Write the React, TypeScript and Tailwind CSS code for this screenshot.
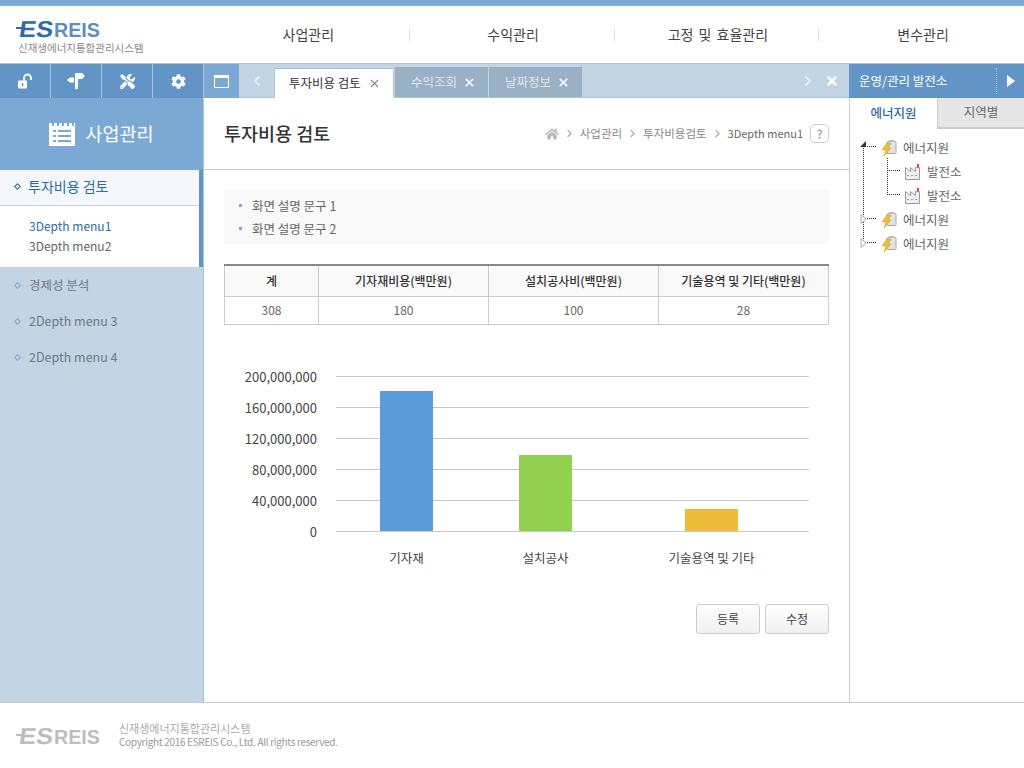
import { FaCog, FaHome, FaTools } from 'react-icons/fa';
import { ChevronLeft, ChevronRight, X } from 'lucide-react';

const FONT = "font-['Noto_Sans_CJK_KR','Noto_Sans',sans-serif]";

const NAV = ['사업관리', '수익관리', '고정 및 효율관리', '변수관리'];
const TABLE_HEAD = ['계', '기자재비용(백만원)', '설치공사비(백만원)', '기술용역 및 기타(백만원)'];
const TABLE_ROW = ['308', '180', '100', '28'];

const TICKS = ['200,000,000', '160,000,000', '120,000,000', '80,000,000', '40,000,000', '0'];
const BARS = [
  { label: '기자재', x: 156, w: 53, top: 15, fill: '#5b9bd9' },
  { label: '설치공사', x: 295, w: 53, top: 79, fill: '#92d14f' },
  { label: '기술용역 및 기타', x: 461, w: 53, top: 133, fill: '#edbb3a' },
];

function Logo({ gray }: { gray?: boolean }) {
  const dark = gray ? '#bdbdbd' : '#2a6cab';
  const light = gray ? '#bdbdbd' : '#5b8fbf';
  return (
    <svg width="90" height="24" viewBox="0 0 90 24" className="block">
      <rect x="0" y="10" width="8" height="2" fill={dark} />
      <text x="0" y="20" transform="skewX(-8) translate(5 0)" fontFamily="Liberation Sans" fontWeight="700" fontSize="23" textLength="34" lengthAdjust="spacingAndGlyphs" fill={dark}>ES</text>
      <text x="38" y="20" fontFamily="Liberation Sans" fontWeight="700" fontSize="20" textLength="46" lengthAdjust="spacingAndGlyphs" fill={light}>REIS</text>
    </svg>
  );
}

function LockIcon() {
  return (
    <svg width="16" height="16" viewBox="0 0 16 16">
      <path d="M7 8V5a3.500 3.500 0 0 1 7 0v2" fill="none" stroke="#fff" strokeWidth="1.800" />
      <rect x="1" y="7.500" width="9" height="8" rx="1" fill="#fff" />
      <rect x="4.800" y="10" width="1.500" height="3.500" fill="#6295c5" />
    </svg>
  );
}

function SignIcon() {
  return (
    <svg width="18" height="16" viewBox="0 0 18 16" fill="#fff">
      <path d="M8 0h7l3 3-3 3h-4v10H8z" />
      <path d="M7 4.500H3L0 7l3 2.500h4z" />
    </svg>
  );
}

function NoteIcon() {
  return (
    <svg width="26" height="24" viewBox="0 0 26 24">
      <rect x="0" y="1" width="26" height="23" fill="#fff" />
      <g fill="#7ba9d4">
        <rect x="3" y="1" width="2" height="3" />
        <rect x="8" y="1" width="2" height="3" />
        <rect x="13" y="1" width="2" height="3" />
        <rect x="18" y="1" width="2" height="3" />
        <rect x="23" y="1" width="2" height="3" />
        <rect x="4" y="8" width="3" height="2" />
        <rect x="9" y="8" width="13" height="2" />
        <rect x="4" y="13" width="3" height="2" />
        <rect x="9" y="13" width="13" height="2" />
        <rect x="4" y="18" width="3" height="2" />
        <rect x="9" y="18" width="13" height="2" />
      </g>
    </svg>
  );
}

function EnergyIcon() {
  return (
    <svg width="16" height="16" viewBox="0 0 16 16" className="shrink-0">
      <rect x="6" y="1.500" width="9" height="12" rx="1" fill="#e4e4e4" stroke="#a8a8a8" />
      <rect x="8" y="0" width="5" height="2" fill="#bdbdbd" />
      <path d="M6 3h4L7.500 8H10l-7 8 2-6H1z" fill="#eec031" stroke="#c99a1a" strokeWidth="0.5" />
    </svg>
  );
}

function PlantIcon() {
  return (
    <svg width="16" height="16" viewBox="0 0 16 16" className="shrink-0">
      <path d="M0.500 15.500V3.500l5 4v-4l5 4v-4l4 0V15.500z" fill="#efefef" stroke="#9a9a9a" />
      <path d="M2 11.500h2M6 11.500h2M10 11.500h2" stroke="#7ba9d4" strokeWidth="1" />
      <rect x="12" y="0" width="2" height="3" fill="#e03a3a" />
    </svg>
  );
}

function TreeRow({ sub, label }: { sub?: boolean; label: string }) {
  return (
    <div className={`flex h-6 items-center gap-1.5 text-[12.500px] text-[#666] ${sub ? 'pl-[55px]' : 'pl-[31px]'}`}>
      {sub ? <PlantIcon /> : <EnergyIcon />}
      <span>{label}</span>
    </div>
  );
}

function SideItem({ label }: { label: string }) {
  return (
    <div className="flex h-9 items-center gap-[9px] pl-[15px] text-[12.500px] text-[#6c7a88]">
      <span className="size-[5px] rotate-45 border border-[#8aa5bf]" />
      <span>{label}</span>
    </div>
  );
}

export default function App() {
  return (
    <div className={`flex h-[768px] w-[1024px] flex-col overflow-hidden bg-white ${FONT}`}>
      <div className="h-[6px] bg-[#7ba9d4]" />

      {/* Header */}
      <header className="flex h-[57px] items-center">
        <div className="w-[205px] pl-[16px] pt-[2px]">
          <Logo />
          <div className="ml-[2px] text-[10.500px] leading-[14px] text-[#8a8a8a]">신재생에너지통합관리시스템</div>
        </div>
        <nav className="grid flex-1 grid-cols-4">
          {NAV.map((n, i) => (
            <div key={n} className={`flex h-3 items-center justify-center pl-[3px] text-[14px] text-[#444] [word-spacing:2px] ${i < 3 ? 'border-r border-[#ddd]' : ''}`}>
              {n}
            </div>
          ))}
        </nav>
      </header>

      {/* Toolbar + tabs */}
      <div className="flex h-[35px] border-t border-[#a9c4dd]">
        <div className="flex w-[204px] bg-[#6295c5]">
          {[<LockIcon key="a" />, <SignIcon key="b" />, <FaTools key="c" />, <FaCog key="d" />].map((ic, i) => (
            <div key={i} className="flex w-[51px] items-center justify-center border-r border-[#a9c4dd] text-[15px] text-white">
              {ic}
            </div>
          ))}
        </div>
        <div className="flex w-[35px] items-center justify-center bg-[#7ba9d4]">
          <div className="h-[13px] w-[15px] border border-t-[3px] border-white" />
        </div>
        <div className="flex flex-1 items-end border-b border-[#a9c4dd] bg-[#c3d4e5]">
          <div className="flex h-full w-[35px] items-center justify-center text-[#e3ecf5]">
            <ChevronLeft size={16} strokeWidth={3} />
          </div>
          <div className="-mb-px flex h-[30px] w-[120px] items-center gap-[7px] border border-b-0 border-[#a9c4dd] bg-white pl-[14px] text-[12.500px] text-[#333]">
            투자비용 검토 <X size={13} className="text-[#888]" />
          </div>
          <div className="ml-px flex h-[30px] w-[93px] items-center gap-1.5 bg-[#9ab0c5] pl-[16px] text-[12.500px] text-[#dfe7ef]">
            수익조회 <X size={13} strokeWidth={3} className="text-white" />
          </div>
          <div className="ml-px flex h-[30px] w-[93px] items-center gap-1.5 bg-[#9ab0c5] pl-[16px] text-[12.500px] text-[#dfe7ef]">
            날짜정보 <X size={13} strokeWidth={3} className="text-white" />
          </div>
          <div className="flex h-full flex-1 items-center justify-end gap-[9px] pr-[10px] text-[#e3ecf5]">
            <ChevronRight size={16} strokeWidth={3} />
            <X size={14} strokeWidth={4} className="text-white" />
          </div>
        </div>
        <div className="flex w-[175px] items-center justify-between bg-[#6295c5] pl-[10px] text-[12.500px] text-white">
          <span>운영/관리 발전소</span>
          <div className="flex h-[26px] w-[28px] items-center justify-center border-l border-dotted border-[#a9c4dd]">
            <span className="border-y-[6px] border-l-[8px] border-y-transparent border-l-white" />
          </div>
        </div>
      </div>

      {/* Body */}
      <div className="flex min-h-0 flex-1">
        <aside className="w-[204px] border-r border-[#a9c4dd] bg-[#c3d4e5]">
          <div className="flex h-[72px] items-center justify-center gap-2.5 bg-[#7ba9d4] text-[18.500px] text-white">
            <NoteIcon />
            <span>사업관리</span>
          </div>
          <div className="border-r-4 border-[#6295c5] bg-white">
            <div className="flex h-9 items-center gap-2 border-b border-[#c3d4e5] bg-[#f4f8fc] pb-[2px] pl-[15px] text-[14px] text-[#2a6cab]">
              <span className="size-[5px] rotate-45 border border-[#2a6cab]" />
              <span>투자비용 검토</span>
            </div>
            <div className="flex h-[61px] flex-col justify-center gap-[1px] pb-[2px] pl-[29px] text-[12px] leading-[19px] text-[#666]">
              <div className="text-[#2a6cab]">3Depth menu1</div>
              <div>3Depth menu2</div>
            </div>
          </div>
          <SideItem label="경제성 분석" />
          <SideItem label="2Depth menu 3" />
          <SideItem label="2Depth menu 4" />
        </aside>

        <main className="min-w-0 flex-1">
          <div className="flex h-[72px] items-center justify-between border-b border-[#ccc] pl-5 pr-5">
            <h1 className="text-[18.500px] font-medium text-[#333]">투자비용 검토</h1>
            <div className="flex items-center gap-1 text-[11.500px] text-[#888]">
              <FaHome size={14} className="text-[#bbb]" />
              <ChevronRight size={13} className="text-[#aaa]" />
              <span>사업관리</span>
              <ChevronRight size={13} className="text-[#aaa]" />
              <span>투자비용검토</span>
              <ChevronRight size={13} className="text-[#aaa]" />
              <span className="text-[11px] text-[#666]">3Depth menu1</span>
              <span className="ml-[3px] flex size-[19px] items-center justify-center rounded-[5px] border border-[#ccc] text-[12px] font-bold text-[#aaa]">?</span>
            </div>
          </div>

          <div className="px-5 pt-5">
            <ul className="h-[54px] bg-[#f9f9f9] py-[4px] pl-[15px] text-[12.500px] leading-[23px] text-[#666]">
              <li className="flex items-center gap-[10px]"><span className="size-[3px] bg-[#7ba9d4]" />화면 설명 문구 1</li>
              <li className="flex items-center gap-[10px]"><span className="size-[3px] bg-[#7ba9d4]" />화면 설명 문구 2</li>
            </ul>

            <table className="mt-5 w-[604px] table-fixed border-collapse border-t-2 border-t-[#888] text-center text-[12px]">
              <colgroup>
                <col className="w-[94px]" />
                <col className="w-[170px]" />
                <col className="w-[170px]" />
                <col className="w-[170px]" />
              </colgroup>
              <thead>
                <tr className="h-[31px] bg-[#f9f9f9]">
                  {TABLE_HEAD.map((h) => (
                    <th key={h} className="border border-t-0 border-[#ccc] font-medium text-[#333]">{h}</th>
                  ))}
                </tr>
              </thead>
              <tbody>
                <tr className="h-[28px]">
                  {TABLE_ROW.map((c, i) => (
                    <td key={i} className="border border-[#ccc] text-[#666]">{c}</td>
                  ))}
                </tr>
              </tbody>
            </table>

            {/* Bar chart */}
            <svg width="605" height="210" viewBox="0 0 605 210" className="mt-[41px] block" fontFamily="Noto Sans CJK KR" fontSize="12.500" fill="#444">
              {TICKS.map((t, i) => (
                <g key={t}>
                  <line x1="112" x2="585" y1={10.5 + i * 31} y2={10.5 + i * 31} stroke="#c8c8c8" />
                  <text x="93" y={16 + i * 31} textAnchor="end" fontSize="13">{t}</text>
                </g>
              ))}
              {BARS.map((b) => (
                <g key={b.label}>
                  <rect x={b.x} y={10 + b.top} width={b.w} height={155 - b.top} fill={b.fill} />
                  <text x={b.x + b.w / 2} y="197" textAnchor="middle">{b.label}</text>
                </g>
              ))}
            </svg>

            <div className="mt-7 flex justify-end gap-[5px]">
              <button className="h-[30px] w-[64px] rounded-[3px] border border-[#ccc] bg-gradient-to-b from-white to-[#f0f0f0] text-[12px] text-[#444]">등록</button>
              <button className="h-[30px] w-[64px] rounded-[3px] border border-[#ccc] bg-gradient-to-b from-white to-[#f0f0f0] text-[12px] text-[#444]">수정</button>
            </div>
          </div>
        </main>

        {/* Right tree panel */}
        <aside className="w-[175px] border-l border-[#ccc]">
          <div className="grid h-[31px] grid-cols-[87px_1fr] text-[12.500px]">
            <div className="flex items-center justify-center font-medium text-[#2a6cab]">에너지원</div>
            <div className="flex items-center justify-center border-b-2 border-l border-[#ccc] bg-[#e6e6e6] text-[#666]">지역별</div>
          </div>
          <div className="relative pt-[7px]">
            <svg width="50" height="120" viewBox="0 0 50 120" className="absolute left-[9px] top-[7px]" fill="none" stroke="#333" strokeDasharray="1 1">
              <path d="M4.500 8V106M6 10.500H17M6 82.500H17M6 106.500H17M28.500 22V58M28 34.500H41M28 58.500H41" />
              <path d="M1 11l6-6v6z" fill="#333" stroke="none" />
              <path d="M2 78.500v9l5-4.500z" fill="#fff" stroke="#aaa" strokeDasharray="none" />
              <path d="M2 102.500v9l5-4.500z" fill="#fff" stroke="#aaa" strokeDasharray="none" />
            </svg>
            <TreeRow label="에너지원" />
            <TreeRow sub label="발전소" />
            <TreeRow sub label="발전소" />
            <TreeRow label="에너지원" />
            <TreeRow label="에너지원" />
          </div>
        </aside>
      </div>

      {/* Footer */}
      <footer className="flex h-[66px] items-center gap-[13px] border-t border-[#ccc] pl-[16px]">
        <Logo gray />
        <div className="-mt-[2px] leading-[14px] text-[#aaa]">
          <div className="text-[11px]">신재생에너지통합관리시스템</div>
          <div className="text-[10px] tracking-[-0.3px] text-[#999]">Copyright 2016 ESREIS Co., Ltd. All rights reserved.</div>
        </div>
      </footer>
    </div>
  );
}
